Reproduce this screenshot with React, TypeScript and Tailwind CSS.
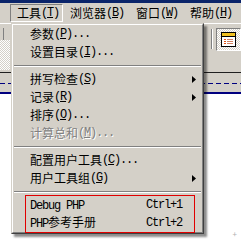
import React from "react";

const CJK = '"Noto Sans CJK SC", "Noto Sans", sans-serif';
const MONO = '"Liberation Mono", "DejaVu Sans Mono", monospace';

function Asc({ children }: { children: React.ReactNode }) {
  return (
    <span className="text-[12px] tracking-[-1.2px]" style={{ fontFamily: MONO }}>
      {children}
    </span>
  );
}

function Acc({ k, dots }: { k: string; dots?: boolean }) {
  return (
    <Asc>
      (<span className="underline underline-offset-[1px]">{k}</span>){dots ? "..." : ""}
    </Asc>
  );
}

function Arrow() {
  return (
    <svg width="4" height="7" viewBox="0 0 4 7" className="ml-auto">
      <path d="M0 0 L4 3.5 L0 7 Z" fill="#000" />
    </svg>
  );
}

function Item({
  label,
  k,
  dots,
  sub,
  disabled,
}: {
  label: string;
  k: string;
  dots?: boolean;
  sub?: boolean;
  disabled?: boolean;
}) {
  return (
    <div
      className={
        "h-[18px] flex items-center pl-[17px] pr-[6px] leading-none text-[12px] " +
        (disabled ? "text-[#808080] [text-shadow:1px_1px_0_#ffffff]" : "text-black")
      }
    >
      <span>{label}</span>
      <Acc k={k} dots={dots} />
      {sub ? <Arrow /> : null}
    </div>
  );
}

function Sep() {
  return (
    <div className="h-[9px] flex flex-col justify-center px-[1px]">
      <div className="h-[1px] bg-[#808080]" />
      <div className="h-[1px] bg-white" />
    </div>
  );
}

function Short({ label, sc }: { label: React.ReactNode; sc: string }) {
  return (
    <div className="h-[18px] flex items-center pl-[17px] leading-none text-[12px] text-black">
      <span className="w-[116px] shrink-0">{label}</span>
      <Asc>{sc}</Asc>
    </div>
  );
}

function WinIcon() {
  return (
    <svg width="16" height="16" viewBox="0 0 16 16">
      <rect x="0.5" y="0.5" width="14" height="14" fill="#fff" stroke="#000" />
      <rect x="1" y="1" width="13" height="3" fill="#f0c020" />
      <line x1="1" y1="4.5" x2="14" y2="4.5" stroke="#000" />
      <rect x="3" y="7" width="2" height="1" fill="#e05010" />
      <rect x="3" y="9" width="2" height="1" fill="#e05010" />
      <rect x="3" y="11" width="2" height="1" fill="#e05010" />
      <rect x="6" y="7" width="6" height="1" fill="#d08060" />
      <rect x="6" y="9" width="6" height="1" fill="#d08060" />
      <rect x="6" y="11" width="6" height="1" fill="#d08060" />
    </svg>
  );
}

export default function App() {
  return (
    <div
      className="relative w-[241px] h-[241px] overflow-hidden bg-white flex flex-col"
      style={{ fontFamily: CJK }}
    >
      {/* title bar strip */}
      <div className="h-[3px] bg-[#0a246a] shrink-0" />
      {/* menu bar */}
      <div className="h-[20px] shrink-0 bg-[#d4d0c8] flex items-start pt-[1px] pl-[10px] text-[12px] leading-none text-black">
        <div className="w-[53px] h-[18px] flex items-center pl-[6px] border border-t-[#808080] border-l-[#808080] border-b-white border-r-white">
          <span>工具</span>
          <Acc k="T" />
        </div>
        <div className="w-[66px] h-[18px] flex items-center pl-[7px]">
          <span>浏览器</span>
          <Acc k="B" />
        </div>
        <div className="w-[54px] h-[18px] flex items-center pl-[7px]">
          <span>窗口</span>
          <Acc k="W" />
        </div>
        <div className="h-[18px] flex items-center pl-[7px]">
          <span>帮助</span>
          <Acc k="H" />
        </div>
      </div>
      {/* toolbar */}
      <div className="h-[49px] shrink-0 bg-[#d4d0c8] border-t border-white flex">
        <div className="w-[10px] flex flex-col">
          <div className="h-[16px] flex">
            <div className="ml-[3px] mt-[4px] w-[1px] h-[12px] bg-[#808080]" />
          </div>
          <div className="h-[30px] bg-[repeating-conic-gradient(#ffffff_0_25%,#d4d0c8_0_50%)] bg-[length:2px_2px]" />
        </div>
        <div className="flex-1" />
        <div className="flex items-start pt-[4px]">
          <div className="mt-[1px] w-[2px] h-[20px] flex">
            <div className="w-[1px] bg-[#808080]" />
            <div className="w-[1px] bg-white" />
          </div>
          <div className="ml-[3px] w-[25px] h-[23px] border border-t-[#808080] border-l-[#808080] border-b-white border-r-white bg-[repeating-conic-gradient(#ffffff_0_25%,#d4d0c8_0_50%)] bg-[length:2px_2px] flex items-center pl-[4px]">
            <WinIcon />
          </div>
        </div>
      </div>
      {/* dark line */}
      <div className="h-[1px] shrink-0 bg-[#202020]" />
      {/* ruler */}
      <div className="h-[21px] shrink-0 bg-[#d4d0c8] border-b-2 border-[#000080] flex flex-col">
        <div className="h-[7px]" />
        <div className="relative h-[7px] flex items-center">
          <div className="w-full h-[1px] bg-[repeating-linear-gradient(90deg,#000080_0_5px,transparent_5px_8px)]" />
        </div>
      </div>
      <div className="flex-1 bg-white flex justify-end items-end pr-[4px] pb-[3px]">
        <span className="text-[8px] leading-none text-[#b0b0b0]">+</span>
      </div>

      {/* dropdown menu overlay */}
      <div className="absolute left-[11px] top-[23px] w-[193px] h-[211px] bg-[#d4d0c8] border-t-[#d4d0c8] border-l-[#d4d0c8] border-r-[#404040] border-b-[#404040] border shadow-[3px_3px_2px_rgba(0,0,0,0.45)]">
        <div className="relative h-full border border-t-white border-l-white border-r-[#808080] border-b-[#808080] flex flex-col">
          <Item label="参数" k="P" dots />
          <Item label="设置目录" k="I" dots />
          <Sep />
          <Item label="拼写检查" k="S" sub />
          <Item label="记录" k="R" sub />
          <Item label="排序" k="O" dots />
          <Item label="计算总和" k="M" dots disabled />
          <Sep />
          <Item label="配置用户工具" k="C" dots />
          <Item label="用户工具组" k="G" sub />
          <Sep />
          <Short label={<Asc>Debug PHP</Asc>} sc="Ctrl+1" />
          <Short
            label={
              <>
                <Asc>PHP</Asc>
                <span>参考手册</span>
              </>
            }
            sc="Ctrl+2"
          />
          <div className="absolute left-[12px] top-[170px] w-[170px] h-[38px] border border-[#e00000]" />
        </div>
      </div>
    </div>
  );
}
